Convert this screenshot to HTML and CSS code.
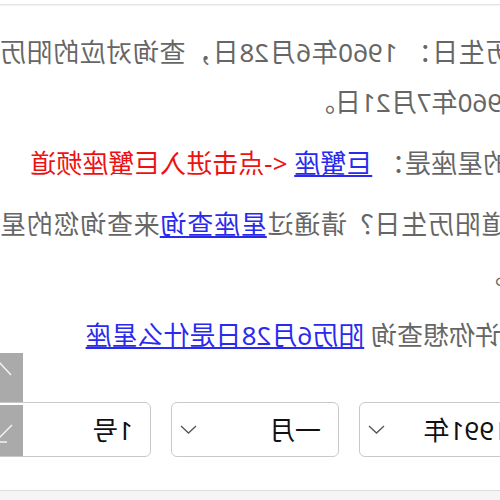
FILE: index.html
```html
<!DOCTYPE html>
<html lang="zh-CN">
<head>
    <meta charset="UTF-8">
    <meta name="viewport" content="width=device-width, initial-scale=1.0">
    <title>农历生日查询</title>
    <link rel="stylesheet" href="styles.css">
</head>
<body>
    <div class="page">
        <div class="topbar"></div>

        <div class="content">
            <p class="birth">农历生日： 1960年6月28日，查询对应的阳历 1960年7月21日。</p>
            <p class="sign">您的星座是： <a href="#">巨蟹座</a> <span class="channel">&lt;-点击进入巨蟹座频道</span></p>
            <p class="hint">不知道阳历生日？请通过<a href="#">星座查询</a>来查询您的星座。</p>
            <p class="more">也许你想查询 <a href="#">阳历6月28日是什么星座</a></p>

            <form class="date-form">
                <div class="select-box">
                    <select name="year"><option>1991年</option></select>
                    <svg class="arrow" width="17" height="9" viewBox="0 0 17 9"><polyline points="1,1 8.5,8 16,1"/></svg>
                </div>
                <div class="select-box">
                    <select name="month"><option>一月</option></select>
                    <svg class="arrow" width="17" height="9" viewBox="0 0 17 9"><polyline points="1,1 8.5,8 16,1"/></svg>
                </div>
                <div class="select-box">
                    <select name="day"><option>1号</option></select>
                    <svg class="arrow" width="17" height="9" viewBox="0 0 17 9"><polyline points="1,1 8.5,8 16,1"/></svg>
                </div>
            </form>
        </div>

        <div class="footer"></div>

        <!-- floating scroll buttons -->
        <div class="float-nav">
            <a class="float-btn" href="#">
                <svg width="48" height="49" viewBox="0 0 48 49"><polyline points="12,22 24,9 36,22"/></svg>
            </a>
            <a class="float-btn down" href="#">
                <svg width="48" height="51" viewBox="0 0 48 51"><polyline points="11,20 23,32 35,20"/><line x1="16" y1="37" x2="32" y2="37"/></svg>
            </a>
        </div>
    </div>
</body>
</html>
```

FILE: styles.css
```css
* {
    margin: 0;
    padding: 0;
    box-sizing: border-box;
}

body {
    font-family: "Noto Sans", "Noto Sans CJK SC", sans-serif;
    background: #fff;
    overflow: hidden;
}

.page {
    position: relative;
    width: 500px;
    height: 500px;
    overflow: hidden;
    transform: scaleX(-1);
}

.topbar {
    height: 5px;
    border-bottom: 1px solid #e3e3e3;
    box-shadow: 0 1px 2px rgba(0, 0, 0, 0.05);
}

.content {
    margin-left: -24px;
    width: 524px;
    padding-top: 22px;
    font-size: 26px;
    line-height: 50px;
    color: #666;
    text-align: justify;
}

.content p {
    margin-bottom: 11px;
}

.content a {
    color: #2a2aee;
    text-decoration: underline;
}

.birth {
    margin-left: 7px;
    text-indent: -21px;
}

.sign {
    text-indent: -11px;
}

.channel {
    color: #ee1111;
}

.hint {
    margin-left: -7px;
    text-indent: -30px;
}

.more {
    text-indent: -3px;
}

.date-form {
    display: flex;
    gap: 20px;
    margin-top: 42px;
    margin-left: -3px;
}

.select-box {
    position: relative;
    width: 168px;
    height: 55px;
    flex: none;
}

.select-box select {
    appearance: none;
    -webkit-appearance: none;
    width: 100%;
    height: 100%;
    padding-left: 17px;
    border: 1px solid #c9c9c9;
    border-radius: 6px;
    background: #fff;
    font-family: inherit;
    font-size: 26px;
    color: #111;
}

.select-box .arrow {
    position: absolute;
    right: 9px;
    top: 23px;
    fill: none;
    stroke: #555;
    stroke-width: 1.3;
    pointer-events: none;
}

.footer {
    margin-top: 33px;
    height: 20px;
    border-top: 1px solid #ddd;
    background: #f5f5f5;
}

.float-nav {
    position: absolute;
    left: 477px;
    top: 353px;
    width: 48px;
    display: flex;
    flex-direction: column;
    gap: 3px;
}

.float-btn {
    display: block;
    height: 49px;
    background: #aaa;
}

.float-btn.down {
    height: 51px;
}

.float-btn svg {
    display: block;
    fill: none;
    stroke: #f2f2f2;
    stroke-width: 1.5;
}
```
